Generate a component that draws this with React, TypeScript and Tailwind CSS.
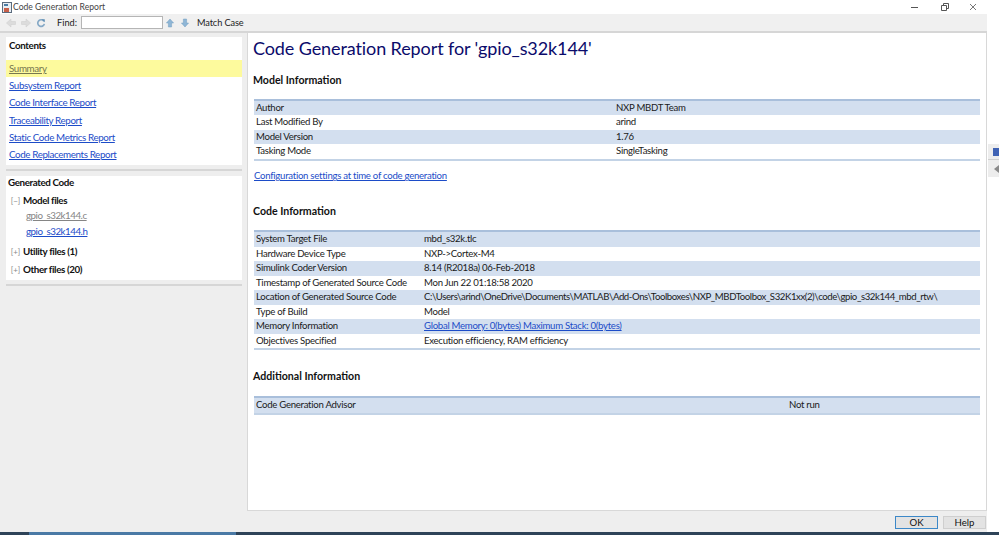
import type { ReactNode } from "react";

const font = { fontFamily: 'Lato, "Open Sans", sans-serif' };

const contents = [
  "Subsystem Report",
  "Code Interface Report",
  "Traceability Report",
  "Static Code Metrics Report",
  "Code Replacements Report",
];

function Link({ children, className = "" }: { children: ReactNode; className?: string }) {
  return <a className={`text-[#1c4cc8] underline ${className}`}>{children}</a>;
}

function InfoTable({ rows, pad = "w-[168px]" }: { rows: [string, ReactNode][]; pad?: string }) {
  return (
    <div className="ml-[1px] mr-[6px] border-y-2 border-b-[#c3d3e6] border-t-[#a9bfdb] text-[9.6px] tracking-[-0.28px] text-[#1a1a1a]">
      {rows.map(([k, v], i) => (
        <div key={k} className={`flex h-[14.5px] items-center pl-[2px] ${i % 2 === 0 ? "bg-[#d3dfef]" : "bg-white"}`}>
          <span className={`shrink-0 ${pad}`}>{k}</span>
          <span className="whitespace-nowrap">{v}</span>
        </div>
      ))}
    </div>
  );
}

function TreeBox({ open }: { open?: boolean }) {
  return <span className="w-[13px] text-center text-[8px] font-normal leading-none tracking-normal text-[#888]">{open ? "[−]" : "[+]"}</span>;
}

function ToolIcon({ kind }: { kind: "back" | "forward" | "refresh" | "up" | "down" }) {
  if (kind === "refresh") {
    return (
      <svg width="10" height="10" viewBox="0 0 12 12" fill="none">
        <path d="M9.500 4A4 4 0 1 0 10 7" stroke="#86a9c6" strokeWidth="2" />
        <path d="M6.500 1.500h4v3.500z" fill="#5f8fb5" />
      </svg>
    );
  }
  if (kind === "up" || kind === "down") {
    return (
      <svg width="8" height="10" viewBox="0 0 10 12" className={kind === "down" ? "rotate-180" : ""}>
        <path d="M5 1 9.500 6H7v5H3V6H.5z" fill="#8fb6d6" stroke="#6f9bbf" strokeWidth=".6" />
      </svg>
    );
  }
  return (
    <svg width="10" height="10" viewBox="0 0 10 10" className={kind === "forward" ? "rotate-180" : ""}>
      <path d="M0.500 5 5 1v2.500h4.500v3H5V9z" fill="#dcdcdc" stroke="#cdcdcd" strokeWidth=".5" />
    </svg>
  );
}

export default function App() {
  return (
    <div className="flex h-[535px] w-[999px] flex-col overflow-hidden bg-white" style={font}>
      <div className="flex min-h-0 flex-1">
        <div className="flex w-[987px] shrink-0 flex-col">
          {/* title bar */}
          <div className="flex h-[14px] items-center bg-white pl-[2px]">
            <svg width="10" height="11" viewBox="0 0 10 11">
              <rect x=".5" y=".5" width="9" height="10" fill="#e8eef4" stroke="#5a6b7d" />
              <rect x="2" y="6" width="5" height="4" fill="#c8604a" />
              <rect x="2" y="2" width="4" height="2" fill="#4d7da5" />
            </svg>
            <span className="ml-[1px] text-[8.6px] text-[#444]">Code Generation Report</span>
            <div className="ml-auto flex items-center">
              <svg width="8" height="8" viewBox="0 0 8 8" className="mr-[22px]"><path d="M0 4.500h7" stroke="#555" /></svg>
              <svg width="8" height="8" viewBox="0 0 8 8" className="mr-[20px]"><path d="M.5 2.500h5v5h-5zM2.500 2.500v-2h5v5h-2" fill="none" stroke="#555" /></svg>
              <svg width="8" height="8" viewBox="0 0 8 8" className="mr-[10px]"><path d="M1 1l6 6M7 1 1 7" stroke="#555" strokeWidth=".8" /></svg>
            </div>
          </div>

          {/* toolbar */}
          <div className="flex h-[19px] items-center border-b-2 border-[#d6d6d6] bg-[#f0f0f0] pl-[6px] text-[9.2px] text-[#222]">
            <ToolIcon kind="back" />
            <span className="w-[5px]" />
            <ToolIcon kind="forward" />
            <span className="w-[5px]" />
            <ToolIcon kind="refresh" />
            <span className="ml-[11px] w-[24px]">Find:</span>
            <div className="h-[13px] w-[82px] border border-[#b5b5b5] bg-white" />
            <span className="ml-[3px] flex"><ToolIcon kind="up" /></span>
            <span className="ml-[7px] flex"><ToolIcon kind="down" /></span>
            <span className="ml-[8px] tracking-[-0.1px]">Match Case</span>
          </div>

          {/* body */}
          <div className="flex min-h-0 flex-1 bg-[#eeeeee]">
            <aside className="w-[247px] shrink-0 pl-[6px] pr-[5px] pt-[4px] tracking-[-0.38px]">
              <div className="flex h-[128px] flex-col bg-white pt-[1px]">
                <div className="pl-[3px] text-[9.8px] font-bold text-[#111]">Contents</div>
                <div className="mt-[7.5px] flex h-[16.500px] items-center bg-[#fdfa9d] pl-[3px] text-[9.8px] text-[#77774f] underline">
                  Summary
                </div>
                <div className="flex flex-col">
                  {contents.map((c) => (
                    <div key={c} className="flex h-[17.3px] items-center pl-[3px] text-[9.8px]">
                      <Link>{c}</Link>
                    </div>
                  ))}
                </div>
              </div>
              <div className="mt-[4px] h-[2px] bg-[#d6d6d6]" />
              <div className="mt-[5px] h-[104px] bg-white pl-[2px] text-[9.8px] font-bold text-[#111]">
                <div className="h-[12px] leading-[12px]">Generated Code</div>
                <div className="mt-[5.700px] flex h-[14px] items-center pl-[1px]"><TreeBox open /><span className="pl-[1px]">Model files</span></div>
                <div className="h-[15px] pl-[18px] font-normal tracking-[-0.5px] text-[#858585] underline">gpio_s32k144.c</div>
                <div className="mt-[1px] h-[15px] pl-[18px] font-normal tracking-[-0.5px]"><Link>gpio_s32k144.h</Link></div>
                <div className="mt-[6px] flex h-[14px] items-center pl-[1px]"><TreeBox /><span className="pl-[1px]">Utility files (1)</span></div>
                <div className="mt-[4px] flex h-[14px] items-center pl-[1px]"><TreeBox /><span className="pl-[1px]">Other files (20)</span></div>
              </div>
              <div className="mt-[4px] h-[2px] bg-[#d6d6d6]" />
            </aside>

            <main className="mb-[24px] w-[740px] border-x border-b border-[#d8d8d8] bg-white pl-[5px]">
              <h1 className="mt-[1px] h-[28px] text-[18px] leading-[28px] tracking-[-0.1px] text-[#0b0b6b]">Code Generation Report for 'gpio_s32k144'</h1>
              <h2 className="mt-[11px] h-[14px] text-[10.6px] font-bold leading-[14px] text-[#111]">Model Information</h2>
              <div className="mt-[11.500px]">
                <InfoTable
                  pad="w-[360px]"
                  rows={[
                    ["Author", "NXP MBDT Team"],
                    ["Last Modified By", "arind"],
                    ["Model Version", "1.76"],
                    ["Tasking Mode", "SingleTasking"],
                  ]}
                />
              </div>
              <div className="ml-[1px] mt-[8.500px] h-[14px] text-[9.6px] leading-[14px] tracking-[-0.27px]">
                <Link>Configuration settings at time of code generation</Link>
              </div>
              <h2 className="mt-[21px] h-[14px] text-[10.6px] font-bold leading-[14px] text-[#111]">Code Information</h2>
              <div className="mt-[12px]">
                <InfoTable
                  rows={[
                    ["System Target File", "mbd_s32k.tlc"],
                    ["Hardware Device Type", "NXP->Cortex-M4"],
                    ["Simulink Coder Version", "8.14 (R2018a) 06-Feb-2018"],
                    ["Timestamp of Generated Source Code", "Mon Jun 22 01:18:58 2020"],
                    ["Location of Generated Source Code", <span className="tracking-[-0.41px]">C:\Users\arind\OneDrive\Documents\MATLAB\Add-Ons\Toolboxes\NXP_MBDToolbox_S32K1xx(2)\code\gpio_s32k144_mbd_rtw\</span>],
                    ["Type of Build", "Model"],
                    ["Memory Information", <Link>Global Memory: 0(bytes) Maximum Stack: 0(bytes)</Link>],
                    ["Objectives Specified", "Execution efficiency, RAM efficiency"],
                  ]}
                />
              </div>
              <h2 className="mt-[19px] h-[14px] text-[10.6px] font-bold leading-[14px] text-[#111]">Additional Information</h2>
              <div className="mt-[13px]">
                <InfoTable pad="w-[533px]" rows={[["Code Generation Advisor", "Not run"]]} />
              </div>
            </main>
          </div>
        </div>

        {/* neighbouring window tabs */}
        <div className="flex flex-1 flex-col pl-[1px] pt-[144px]">
          <div className="flex h-[16px] items-center border-b border-[#cfcfcf] bg-[#ededed] pl-[5px]">
            <div className="h-[8px] w-full bg-[#3f62b4]" />
          </div>
          <div className="flex h-[17px] items-center bg-[#ededed] pl-[6px]">
            <div className="h-0 w-0 border-y-[4px] border-r-[5px] border-y-transparent border-r-[#8a8a8a]" />
          </div>
        </div>
      </div>

      {/* button bar */}
      <div className="-mt-[24px] flex h-[21px] w-[987px] items-end justify-end gap-[5px] pb-[3px] pr-[1px] text-[9.6px] text-[#111]">
        <button className="h-[13px] w-[43px] border border-[#3c88c8] bg-[#e3e3e3] leading-none">OK</button>
        <button className="h-[13px] w-[43px] border border-[#cfcfcf] bg-[#e3e3e3] leading-none">Help</button>
      </div>
      <div className="h-[3px] shrink-0 bg-[#2e4358]">
        <div className="ml-[29px] h-full w-[207px] bg-[#4a79a5]" />
      </div>
    </div>
  );
}
